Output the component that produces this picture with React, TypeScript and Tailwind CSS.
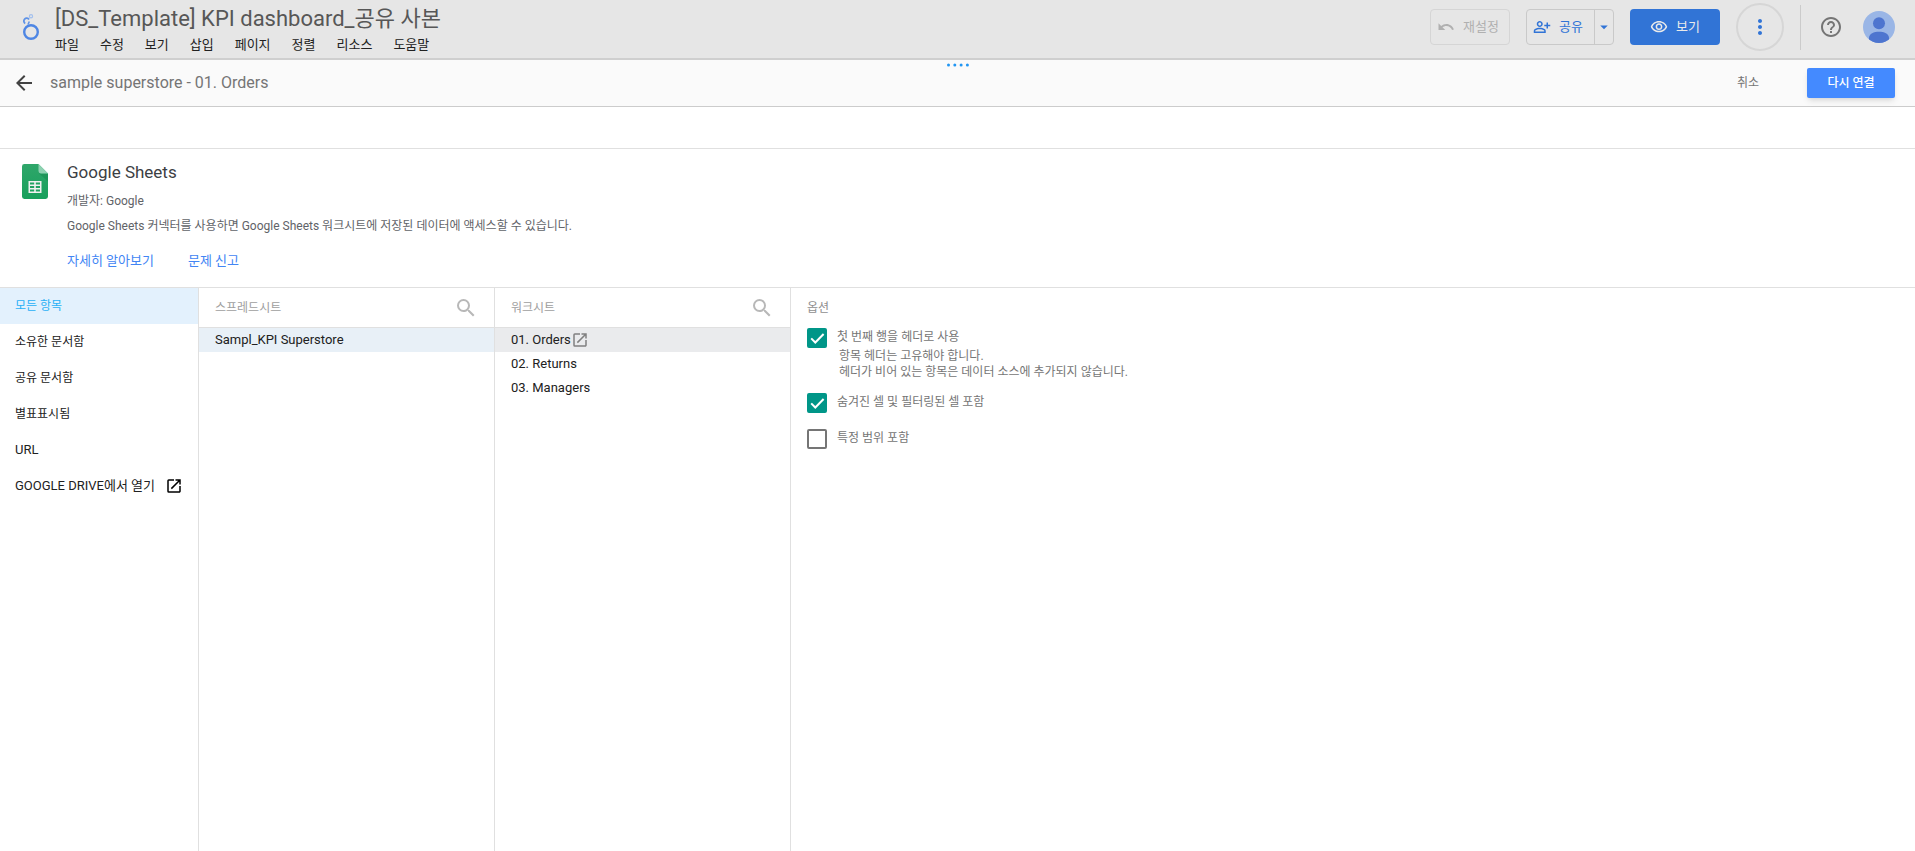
import React from "react";
import {
  MdArrowBack,
  MdArrowDropDown,
  MdHelpOutline,
  MdMoreVert,
  MdOpenInNew,
  MdOutlinePersonAddAlt,
  MdOutlineVisibility,
  MdSearch,
  MdUndo,
} from "react-icons/md";

const MENU = ["파일", "수정", "보기", "삽입", "페이지", "정렬", "리소스", "도움말"];
const SOURCES = ["모든 항목", "소유한 문서함", "공유 문서함", "별표표시됨"];
const WORKSHEETS = ["01. Orders", "02. Returns", "03. Managers"];

function Logo() {
  return (
    <svg viewBox="0 0 20 30" className="h-[30px] w-5" fill="none" aria-hidden="true">
      <circle cx="11" cy="20" r="6.8" stroke="#4e86e4" strokeWidth="2.4" />
      <path d="M5.2 11.4A2.8 2.8 0 1 1 9 7.500" stroke="#5f93e7" strokeWidth="1.8" />
      <path d="M9.300 9.500L8 12.500" stroke="#5f93e7" strokeWidth="1.6" />
      <circle cx="11" cy="4.2" r="1.6" stroke="#a3c0ee" strokeWidth="1.2" />
    </svg>
  );
}

function SheetsIcon() {
  return (
    <svg viewBox="0 0 26 35" className="h-[35px] w-[26px] shrink-0" aria-hidden="true">
      <defs>
        <linearGradient id="sheet" x1="0" y1="0" x2="0" y2="1">
          <stop offset="0" stopColor="#2fa66a" />
          <stop offset="1" stopColor="#18a05c" />
        </linearGradient>
      </defs>
      <path d="M2.4 0H16.500L26 9.500V32.600A2.400 2.400 0 0 1 23.600 35H2.400A2.400 2.400 0 0 1 0 32.600V2.400A2.400 2.400 0 0 1 2.400 0Z" fill="url(#sheet)" />
      <path d="M17 9.500H26V17.500Z" fill="#0f7d45" opacity="0.35" />
      <path d="M16.500 0L26 9.500H18.900A2.400 2.400 0 0 1 16.500 7.100Z" fill="#8ed1b1" />
      <path
        fillRule="evenodd"
        d="M6.500 17H19.500V29H6.500ZM8 18.500V20.500H12.200V18.500ZM13.800 18.500V20.500H18V18.500ZM8 22V24H12.200V22ZM13.800 22V24H18V22ZM8 25.500V27.500H12.200V25.500ZM13.800 25.500V27.500H18V25.500Z"
        fill="#f1f1f1"
      />
    </svg>
  );
}

function Avatar() {
  return (
    <svg viewBox="0 0 32 32" className="size-8" aria-hidden="true">
      <defs>
        <clipPath id="disc">
          <circle cx="16" cy="16" r="16" />
        </clipPath>
      </defs>
      <g clipPath="url(#disc)">
        <rect width="32" height="32" fill="#9ab6e6" />
        <circle cx="16" cy="12.300" r="6" fill="#4e75cf" />
        <path d="M6 32V27C6 22.500 11 20.700 16 20.700S26 22.500 26 27V32Z" fill="#4e75cf" />
      </g>
    </svg>
  );
}

function Option({ label, checked, children }: { label: string; checked?: boolean; children?: React.ReactNode }) {
  return (
    <div>
      <label className="flex h-5 gap-2.5">
        <span className="relative size-5 shrink-0">
          <input
            type="checkbox"
            defaultChecked={checked}
            className="peer block size-5 appearance-none rounded-xs border-2 border-[#757575] checked:border-[#009688] checked:bg-[#009688]"
          />
          <svg viewBox="0 0 20 20" className="pointer-events-none absolute inset-0 hidden size-5 peer-checked:block" fill="none" aria-hidden="true">
            <path d="M4.200 10.400L8.300 14.500L16.600 6" stroke="#fff" strokeWidth="2" />
          </svg>
        </span>
        <span className="leading-[18px]">{label}</span>
      </label>
      {children}
    </div>
  );
}

function ColumnHeader({ title }: { title: string }) {
  return (
    <div className="flex h-10 items-center justify-between border-b border-[#e0e0e0] pl-4 pr-4 text-[#9e9e9e]">
      <h2>{title}</h2>
      <button type="button" aria-label={`${title} 검색`}>
        <MdSearch className="size-6 text-[#b8b8b8]" />
      </button>
    </div>
  );
}

export default function App() {
  return (
    <div className="flex min-h-screen flex-col bg-white font-[Roboto,'Noto_Sans_CJK_KR',sans-serif] text-[13px] text-[#212121]">
      <header className="flex h-[60px] items-start justify-between border-b-2 border-[#cfcfcf] bg-[#e6e6e6] pl-5 pr-5">
        <div className="flex gap-[15px]">
          <div className="pt-3">
            <Logo />
          </div>
          <div className="pt-[5px]">
            <h1 className="text-[22px] leading-7 text-[#575757]">[DS_Template] KPI dashboard_공유 사본</h1>
            <nav className="flex gap-[21px] pt-0.5 leading-5">
              {MENU.map((m) => (
                <button type="button" key={m}>
                  {m}
                </button>
              ))}
            </nav>
          </div>
        </div>
        <div className="flex h-[54px] items-center gap-4 text-[#3174d6]">
          <button type="button" className="flex h-9 w-20 items-center gap-2 rounded border border-[#d5d5d5] pl-1.5 text-[#b0b0b0]">
            <MdUndo className="size-[18px]" />
            재설정
          </button>
          <div className="flex h-9 rounded border border-[#c9c9c9]">
            <button type="button" className="flex w-[67px] items-center gap-2 pl-1.5">
              <MdOutlinePersonAddAlt className="size-[18px]" />
              공유
            </button>
            <button type="button" aria-label="공유 옵션" className="flex w-[19px] items-center justify-center border-l border-[#c9c9c9]">
              <MdArrowDropDown className="size-[18px] shrink-0" />
            </button>
          </div>
          <button type="button" className="flex h-9 w-[90px] items-center justify-center gap-2 rounded bg-[#3174d6] text-[#eaeaea]">
            <MdOutlineVisibility className="size-[18px]" />
            보기
          </button>
          <button type="button" aria-label="더보기" className="flex size-12 items-center justify-center rounded-full border-2 border-[#d6d6d6]">
            <MdMoreVert className="size-6" />
          </button>
          <div className="h-[45px] w-px bg-[#cbcbcb]" />
          <div className="flex items-center gap-5 pl-0.5">
            <button type="button" aria-label="도움말">
              <MdHelpOutline className="size-6 text-[#757575]" />
            </button>
            <button type="button" aria-label="계정">
              <Avatar />
            </button>
          </div>
        </div>
      </header>

      <div className="relative flex h-[47px] items-center justify-between border-b border-[#cccccc] bg-[#fafafa] pl-3 pr-5">
        <svg viewBox="0 0 24 4" className="absolute left-1/2 top-[3px] h-1 w-6 -translate-x-1/2" fill="#2196f3" aria-hidden="true">
          <circle cx="2.500" cy="2" r="1.500" />
          <circle cx="8.800" cy="2" r="1.500" />
          <circle cx="15.100" cy="2" r="1.500" />
          <circle cx="21.400" cy="2" r="1.500" />
        </svg>
        <div className="flex items-center gap-3.5">
          <button type="button" aria-label="뒤로">
            <MdArrowBack className="size-6 text-[#424242]" />
          </button>
          <span className="text-base text-[#757575]">sample superstore - 01. Orders</span>
        </div>
        <div className="flex items-center gap-12 text-xs">
          <button type="button" className="text-[#757575]">
            취소
          </button>
          <button type="button" className="h-[30px] w-[88px] rounded-xs bg-[#448aff] font-medium text-white shadow-md">
            다시 연결
          </button>
        </div>
      </div>

      <div className="h-[42px] border-b border-[#e0e0e0]" />

      <section className="flex h-[139px] gap-[19px] border-b border-[#e0e0e0] pl-[22px] pt-[15px]">
        <SheetsIcon />
        <div className="text-xs text-[#5f6368]">
          <h2 className="text-[17px] leading-4 text-[#3c4043]">Google Sheets</h2>
          <p className="mt-[11px] leading-5">개발자: Google</p>
          <p className="mt-[5px] leading-5">Google Sheets 커넥터를 사용하면 Google Sheets 워크시트에 저장된 데이터에 액세스할 수 있습니다.</p>
          <div className="mt-[15px] flex gap-[34px] text-[13px] leading-5 text-[#4285f4]">
            <a href="#learn">자세히 알아보기</a>
            <a href="#report">문제 신고</a>
          </div>
        </div>
      </section>

      <main className="flex grow">
        <nav className="w-[199px] border-r border-[#e0e0e0] text-xs">
          {SOURCES.map((s, i) => (
            <button
              type="button"
              key={s}
              className={`flex h-9 w-full items-center pl-[15px] ${i === 0 ? "bg-[#e3f1fd] text-[#29b0f6]" : ""}`}
            >
              {s}
            </button>
          ))}
          <button type="button" className="flex h-9 w-full items-center pl-[15px] text-[13px]">
            URL
          </button>
          <a href="#drive" className="flex h-9 items-center gap-2.5 whitespace-nowrap pl-[15px] text-[13px]">
            GOOGLE DRIVE에서 열기
            <MdOpenInNew className="size-[18px] text-black" />
          </a>
        </nav>
        <section className="w-[296px] border-r border-[#e0e0e0] text-xs">
          <ColumnHeader title="스프레드시트" />
          <button type="button" className="flex h-6 w-full items-center bg-[#e8f0f7] pl-4 text-[13px]">
            Sampl_KPI Superstore
          </button>
        </section>
        <section className="w-[296px] border-r border-[#e0e0e0] text-xs">
          <ColumnHeader title="워크시트" />
          {WORKSHEETS.map((w, i) => (
            <button
              type="button"
              key={w}
              className={`flex h-6 w-full items-center pl-4 text-[13px] ${i === 0 ? "bg-[#eaebed]" : ""}`}
            >
              {w}
              {i === 0 && <MdOpenInNew className="size-[18px] text-[#808080]" />}
            </button>
          ))}
        </section>
        <section className="grow pl-4 text-xs text-[#757575]">
          <h2 className="flex h-10 items-center text-[#8f8f8f]">옵션</h2>
          <Option label="첫 번째 행을 헤더로 사용" checked>
            <p className="mb-[13px] pl-8 leading-4">
              항목 헤더는 고유해야 합니다.
              <br />
              헤더가 비어 있는 항목은 데이터 소스에 추가되지 않습니다.
            </p>
          </Option>
          <div className="flex flex-col gap-4">
            <Option label="숨겨진 셀 및 필터링된 셀 포함" checked />
            <Option label="특정 범위 포함" />
          </div>
        </section>
      </main>
    </div>
  );
}
